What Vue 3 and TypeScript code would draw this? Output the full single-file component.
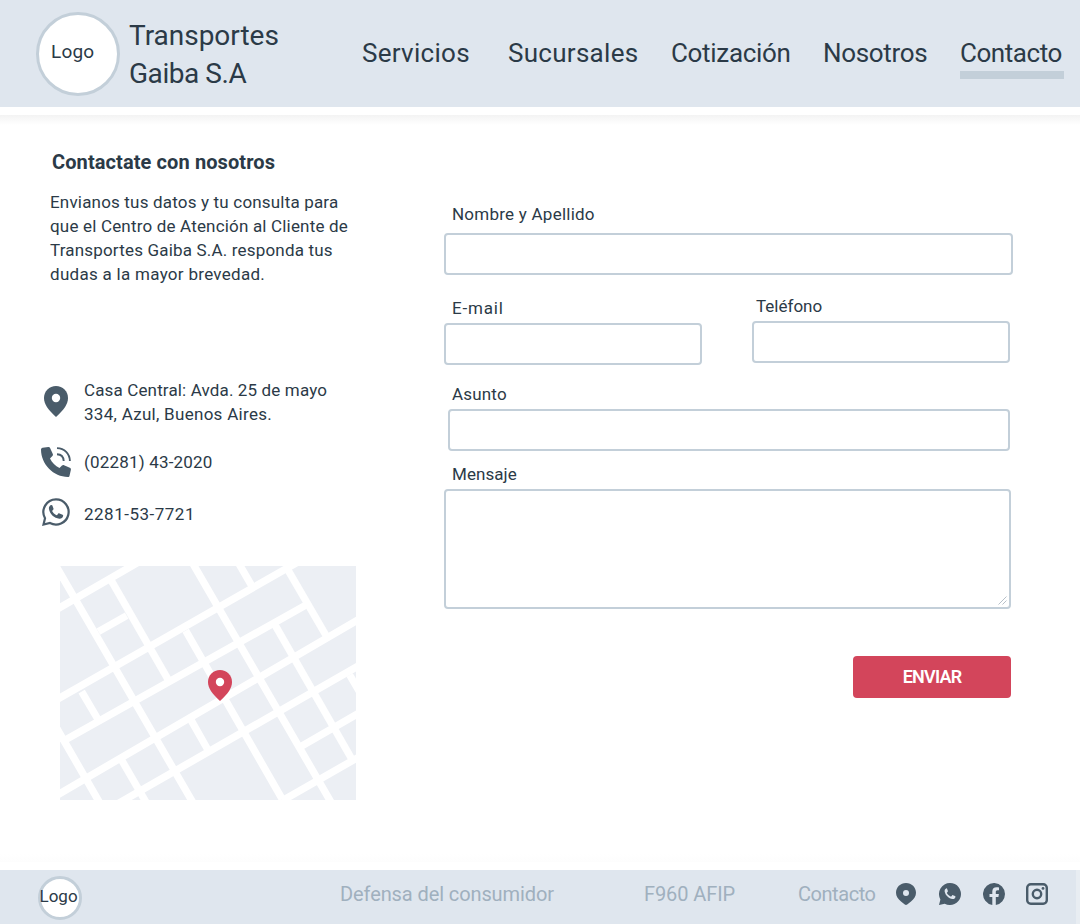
<script setup lang="ts">
interface NavItem { label: string; cls: string; active?: boolean }

const navItems: NavItem[] = [
  { label: 'Servicios', cls: 'servicios' },
  { label: 'Sucursales', cls: 'sucursales' },
  { label: 'Cotización', cls: 'cotizacion' },
  { label: 'Nosotros', cls: 'nosotros' },
  { label: 'Contacto', cls: 'contacto', active: true },
]

// Streets of the map, as line segments
const streets: string[] = [
  'M20 148L280 -2', 'M20 419L770 -9', 'M42 542L770 134', 'M20 706L930 176',
  'M195 736L930 315', 'M752 560L930 457', 'M697 722L930 589', 'M145 215L230 167',
  'M18 18L430 730', 'M184 62L354 358', 'M427 8L845 730', 'M565 8L605 77',
  'M715 32L829 228', 'M95 395L145 480', 'M407 212L697 718', 'M674 193L907 600',
  'M20 504L150 730', 'M213 597L290 730', 'M424 482L474 570', 'M899 345L930 398',
]
const pinPath = 'M12 0C5.2 0 0 5.2 0 12c0 6.400 4.600 12.300 12 19 7.400-6.700 12-12.600 12-19C24 5.200 18.800 0 12 0z'
</script>

<template>
  <div class="page">
    <header class="header">
      <div class="logo logo-lg"><span>Logo</span></div>
      <div class="brand">
        <div>Transportes</div>
        <div class="brand-second">Gaiba S.A</div>
      </div>
      <nav class="nav">
        <a v-for="item in navItems" :key="item.label" :class="[item.cls, { active: item.active }]">{{ item.label }}</a>
      </nav>
    </header>

    <main class="main">
      <section class="info">
        <h1>Contactate con nosotros</h1>
        <p class="intro">
          Envianos tus datos y tu consulta para<br />
          que el Centro de Atención al Cliente de<br />
          Transportes Gaiba S.A. responda tus<br />
          <span class="loose">dudas a la mayor brevedad.</span>
        </p>
        <div class="row address">
          <svg class="pin" viewBox="0 0 24 31"><path :d="pinPath" /><circle cx="12" cy="12" r="4.200" fill="#fff" /></svg>
          <p><span class="tight">Casa Central: Avda. 25 de mayo</span><br /><span class="loose">334, Azul, Buenos Aires.</span></p>
        </div>
        <div class="row phone">
          <svg class="phone-icon" viewBox="0 0 30 30">
            <path d="M1.600.8L7.300.1c.9-.1 1.500.3 1.900 1.100l2.600 5.800c.3.800.2 1.400-.4 2L9 11.500c2 4.200 5.300 7.500 9.500 9.500l2.500-2.400c.6-.6 1.200-.7 2-.4l5.800 2.600c.8.4 1.200 1 1.100 1.900l-1.300 5.700c-.2 1-.7 1.600-1.700 1.600C12.600 30 0 17.400 0 2.600 0 1.700.6 1 1.600.8z" />
            <path d="M16 1.100C23.500 1.300 28.700 6.500 28.900 14M16 7.300c3.900.2 6.500 2.800 6.700 6.700" fill="none" stroke="#4a5c6a" stroke-width="1.900" />
          </svg>
          <p>(02281) 43-2020</p>
        </div>
        <div class="row whatsapp">
          <svg class="wa-icon" viewBox="0 0 24 24">
            <path d="M12 1.200a10.800 10.800 0 1 1-5.200 20.260L1.300 22.700l1.300-5.400A10.800 10.800 0 0 1 12 1.200z" fill="none" stroke="#4a5c6a" stroke-width="1.900" />
            <path d="M7.800 6c-1.600.7-2.100 2.200-1.800 3.700.8 4.200 4.500 7.700 8.800 8.100 1.800.1 2.900-.8 3.300-2.400.1-.5 0-.8-.5-1L15 13.200c-.5-.2-.9-.1-1.200.3l-.8 1c-.2.300-.5.3-.9.100-1.400-.7-2.500-1.700-3.200-3-.2-.4-.2-.6.1-.9l.7-.8c.3-.3.3-.6.100-1L8.900 6.500c-.3-.5-.7-.7-1.100-.5z" />
          </svg>
          <p class="wa-number">2281-53-7721</p>
        </div>
        <svg class="map" viewBox="30 18 888 702" preserveAspectRatio="none">
          <rect x="30" y="18" width="888" height="702" fill="#eceff4" />
          <path v-for="street in streets" :key="street" :d="street" stroke="#fff" stroke-width="22" fill="none" />
          <g transform="translate(474 330) scale(3)"><path :d="pinPath" fill="#d3455b" /><circle cx="12" cy="12" r="4.200" fill="#fff" /></g>
        </svg>
      </section>

      <form class="form" @submit.prevent>
        <div class="field name">
          <label for="nombre">Nombre y Apellido</label>
          <input id="nombre" type="text" />
        </div>
        <div class="pair">
          <div class="field email">
            <label for="email">E-mail</label>
            <input id="email" type="text" />
          </div>
          <div class="field tel">
            <label for="telefono">Teléfono</label>
            <input id="telefono" type="text" />
          </div>
        </div>
        <div class="field subject">
          <label for="asunto">Asunto</label>
          <input id="asunto" type="text" />
        </div>
        <div class="field message">
          <label for="mensaje">Mensaje</label>
          <div class="area">
            <textarea id="mensaje"></textarea>
            <svg class="grip" viewBox="0 0 9 9"><path d="M.5 8.500L8.500.5M4.500 8.500L8.500 4.500" stroke="#b7c0c9" stroke-width="1" fill="none" /></svg>
          </div>
        </div>
        <button type="submit">ENVIAR</button>
      </form>
    </main>

    <footer class="footer">
      <div class="logo logo-sm"><span>Logo</span></div>
      <div class="links">
        <a class="f-defensa">Defensa del consumidor</a>
        <a class="f-afip">F960 AFIP</a>
        <a class="f-contacto">Contacto</a>
      </div>
      <div class="social">
        <svg class="foot-pin" viewBox="0 0 20 22"><path d="M10 0C4.300 0 0 4.300 0 9.800c0 3.700 2 6.300 5 8.700l3.800 3.100c.7.5 1.700.5 2.400 0L15 18.500c3-2.400 5-5 5-8.700C20 4.300 15.700 0 10 0z" /><circle cx="10" cy="10" r="3" fill="#dfe6ee" /></svg>
        <svg viewBox="0 0 22 22"><path d="M11 0a11 11 0 1 1-5.200 20.700L0 22l1.400-5.600A11 11 0 0 1 11 0z" /><path d="M7.300 5.400c-1.400.6-1.900 1.900-1.600 3.400.8 3.700 4.100 6.800 7.900 7.200 1.500.1 2.500-.7 2.800-2.100.1-.4 0-.6-.4-.8l-2-.9c-.4-.2-.6-.1-.9.200l-.8 1c-.2.2-.5.2-.8 0-1.500-.7-2.700-1.800-3.500-3.200-.2-.3-.1-.5.1-.8l.7-.8c.2-.2.2-.4.1-.7L8.100 5.800c-.2-.4-.5-.5-.8-.4z" fill="#dfe6ee" /></svg>
        <svg viewBox="0 0 22 22"><path d="M22 11A11 11 0 1 0 9.300 21.900v-7.800H6.500V11h2.800V8.600c0-2.800 1.600-4.300 4.200-4.300 1.200 0 2.500.2 2.500.2v2.700h-1.400c-1.400 0-1.800.9-1.800 1.700V11h3.100l-.5 3.100h-2.600v7.800A11 11 0 0 0 22 11z" /></svg>
        <svg viewBox="0 0 22 22"><g fill="none" stroke="#4a5c6a"><rect x="1.200" y="1.200" width="19.600" height="19.600" rx="3.600" stroke-width="2.400" /><circle cx="11" cy="11" r="4.200" stroke-width="2.400" /></g><circle cx="17" cy="5.400" r="1.400" /></svg>
      </div>
    </footer>
  </div>
</template>

<style>
body { margin: 0; background: #fff; }
</style>

<style scoped>
* { box-sizing: border-box; }
h1, p { margin: 0; }
svg { display: block; fill: #4a5c6a; flex: none; }
.page {
  width: 1080px; height: 924px; overflow: hidden; display: flex; flex-direction: column;
  color: #2b3a47; font-family: Roboto, "Open Sans", sans-serif;
  font-size: 17px; line-height: 24px; letter-spacing: 0.18px; white-space: nowrap;
}
.header { height: 107px; flex: none; background: #dfe6ee; display: flex; align-items: flex-start; padding-left: 36px; }
.logo { border: 3px solid #c3cfd9; border-radius: 50%; background: #fff; flex: none; }
.logo-lg { width: 84px; height: 84px; margin-top: 12px; padding: 25px 0 0 12px; font-size: 19px; }
.brand { width: 233px; margin: 17px 0 0 9px; font-size: 28px; line-height: 38px; letter-spacing: -0.02px; }
.brand-second { letter-spacing: -0.45px; }
.nav { display: grid; grid-template-columns: 146px 163px 152px 137px 104px; margin-top: 37px; font-size: 26px; line-height: 32px; }
.nav a { height: 42px; }
.nav .servicios, .nav .sucursales { letter-spacing: 0.28px; }
.nav .cotizacion, .nav .nosotros { letter-spacing: -0.32px; }
.nav .contacto { letter-spacing: -0.45px; }
.nav .active { border-bottom: 8px solid #c3cfd9; }

.main {
  height: 755px; margin-top: 8px; flex: none; display: flex; align-items: flex-start;
  background: linear-gradient(#f3f3f3, #fff 10px, #fff 739px, #fdfdfd 747px, #fff 747px);
}
.info { width: 444px; padding: 35px 0 0 40px; }
h1 { margin-left: 12px; font-size: 20px; line-height: 24px; font-weight: 700; letter-spacing: 0.1px; }
.intro { margin: 16px 0 0 10px; }
.loose { letter-spacing: 0.29px; }
.tight { letter-spacing: 0.14px; }
.row { display: flex; align-items: flex-start; }
.address { margin-top: 92px; }
.pin { width: 24px; height: 31px; margin: 8px 16px 0 4px; }
.phone { height: 30px; margin-top: 21px; }
.phone-icon { width: 30px; height: 30px; margin: 0 13px 0 1px; }
.phone p { margin-top: 3px; }
.whatsapp { margin-top: 21px; }
.wa-icon { width: 28px; height: 28px; margin: 0 14px 0 2px; }
.whatsapp p { margin-top: 4px; letter-spacing: 0.5px; }
.map { width: 296px; height: 234px; margin: 40px 0 0 20px; }

.form { width: 569px; padding-top: 87px; display: flex; flex-direction: column; }
.field { display: flex; flex-direction: column; }
.field label { height: 24px; margin-left: 8px; }
.name label { letter-spacing: 0.24px; }
input, textarea {
  display: block; width: 100%; height: 42px; margin: 0; padding: 8px; border: 2px solid #c3cfd9;
  border-radius: 4px; background: #fff; outline: none; resize: none; font: inherit; color: inherit;
}
.name input { margin-top: 7px; }
.pair { display: flex; justify-content: space-between; width: 566px; margin-top: 19px; height: 71px; }
.email { width: 258px; margin-top: 2px; }
.email label { letter-spacing: 0.8px; }
.email input, .tel input, .subject input { margin-top: 3px; }
.tel { width: 258px; }
.tel label { margin-left: 4px; letter-spacing: 0; }
.subject { width: 562px; margin: 17px 0 0 4px; }
.subject label { margin-left: 4px; }
.message { width: 567px; margin-top: 11px; }
.message label { letter-spacing: 0.05px; }
.area { position: relative; margin-top: 3px; }
.area textarea { height: 120px; }
.grip { position: absolute; right: 4px; bottom: 4px; width: 9px; height: 9px; }
button {
  width: 158px; height: 42px; margin: 47px 0 0 409px; padding: 0 0 2px; border: 0; border-radius: 4px;
  background: #d3455b; color: #fff; font-family: Roboto, sans-serif; font-size: 18px; font-weight: 600; letter-spacing: -0.8px;
}

.footer {
  height: 54px; flex: none; display: flex; align-items: flex-start; padding-left: 38px;
  background: #dfe6ee; border-right: 4px solid #e8edf2;
}
.logo-sm { width: 44px; height: 44px; margin-top: 6px; padding: 5px 0 0; letter-spacing: 0; }
.logo-sm span { margin-left: -1.500px; }
.links { width: 556px; margin: 12px 0 0 258px; display: grid; grid-template-columns: 304px 154px 98px; font-size: 20px; letter-spacing: 0; color: #a0b0be; }
.f-defensa { letter-spacing: -0.1px; }
.f-afip { letter-spacing: -0.1px; }
.f-contacto { letter-spacing: -0.45px; }
.social { margin-top: 13px; display: flex; }
.social svg { width: 22px; height: 22px; margin-right: 21.5px; }
.social .foot-pin { width: 20px; margin-right: 23px; }
</style>
